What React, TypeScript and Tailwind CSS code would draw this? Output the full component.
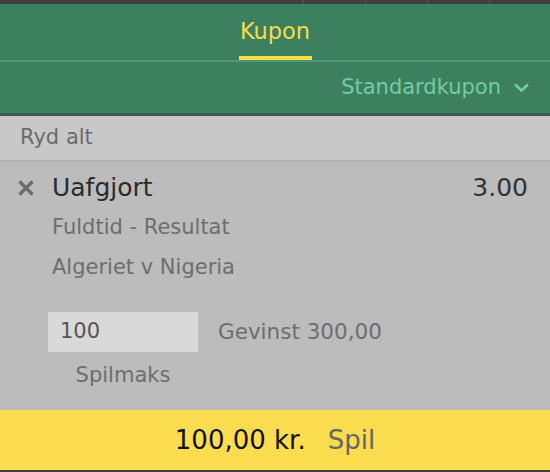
import React from "react";

const font = { fontFamily: '"DejaVu Sans", sans-serif' };

function CloseIcon() {
  return (
    <svg width="18" height="18" viewBox="0 0 18 18" className="shrink-0">
      <path d="M2.5 2.5 L15.5 15.5 M15.5 2.5 L2.5 15.5" stroke="#6b6b6b" strokeWidth="3.2" fill="none" />
    </svg>
  );
}

function Chevron() {
  return (
    <svg width="17" height="11" viewBox="0 0 17 11" className="shrink-0">
      <path d="M2 2.5 L8.5 8.5 L15 2.5" stroke="#74cca3" strokeWidth="2.6" fill="none" />
    </svg>
  );
}

export default function App() {
  return (
    <div className="w-[550px] h-[472px] flex flex-col overflow-hidden bg-[#bcbcbc]" style={font}>
      {/* top strip */}
      <div className="h-[4px] bg-[#404040] flex items-stretch pl-[303px] gap-[61px]">
        <div className="w-px bg-[#575757]" />
        <div className="w-px bg-[#575757]" />
        <div className="w-px bg-[#575757]" />
        <div className="w-px bg-[#575757]" />
      </div>

      {/* tabs */}
      <div className="h-[56px] bg-[#3c8060] flex justify-center">
        <div className="flex flex-col items-center justify-end">
          <span className="text-[22.5px] leading-none text-[#f5dc4c] mb-[14px]">Kupon</span>
          <div className="h-[4px] w-[73px] bg-[#fbdd45]" />
        </div>
      </div>
      <div className="h-[2px] bg-[#4d9c76]" />

      {/* coupon type */}
      <div className="h-[51px] bg-[#3c8060] flex items-center justify-end pr-[20px] gap-[12px]">
        <span className="text-[21px] text-[#74cca3]">Standardkupon</span>
        <Chevron />
      </div>
      <div className="h-[3px] bg-[#3f5a4d]" />

      {/* clear all */}
      <div className="h-[44px] bg-[#c8c8c8] flex items-center px-[20px]">
        <span className="text-[21px] text-[#6b6b6b]">Ryd alt</span>
      </div>
      <div className="h-[2px] bg-[#b0b0b0]" />

      {/* selection */}
      <div className="h-[248px] flex flex-col pt-[6px]">
        <div className="h-10 flex items-center pl-[17px] pr-[22px]">
          <CloseIcon />
          <span className="ml-[17px] text-[25px] text-[#2b2b2b]">Uafgjort</span>
          <span className="ml-auto text-[25px] text-[#333333]">3.00</span>
        </div>
        <div className="h-10 flex items-center pl-[52px] text-[21px] text-[#6e6e6e]">Fuldtid - Resultat</div>
        <div className="h-10 flex items-center pl-[52px] text-[21px] text-[#6e6e6e]">Algeriet v Nigeria</div>

        <div className="mt-[24px] flex pl-[48px] gap-[20px]">
          <div className="flex flex-col items-center w-[150px]">
            <div className="h-10 w-full bg-[#d9d9d9] flex items-center px-[12px] text-[21px] text-[#555555]">100</div>
            <div className="mt-1 h-10 flex items-center text-[21px] text-[#6e6e6e]">Spilmaks</div>
          </div>
          <div className="h-10 flex items-center text-[21.5px] text-[#6e6e6e]">Gevinst 300,00</div>
        </div>
      </div>

      {/* place bet */}
      <div className="h-[60px] bg-[#fcdd50] flex items-center justify-center gap-[22px]">
        <span className="text-[26px] text-[#111111]">100,00 kr.</span>
        <span className="text-[26px] text-[#666666]">Spil</span>
      </div>
      <div className="flex-1 bg-[#404040]" />
    </div>
  );
}
